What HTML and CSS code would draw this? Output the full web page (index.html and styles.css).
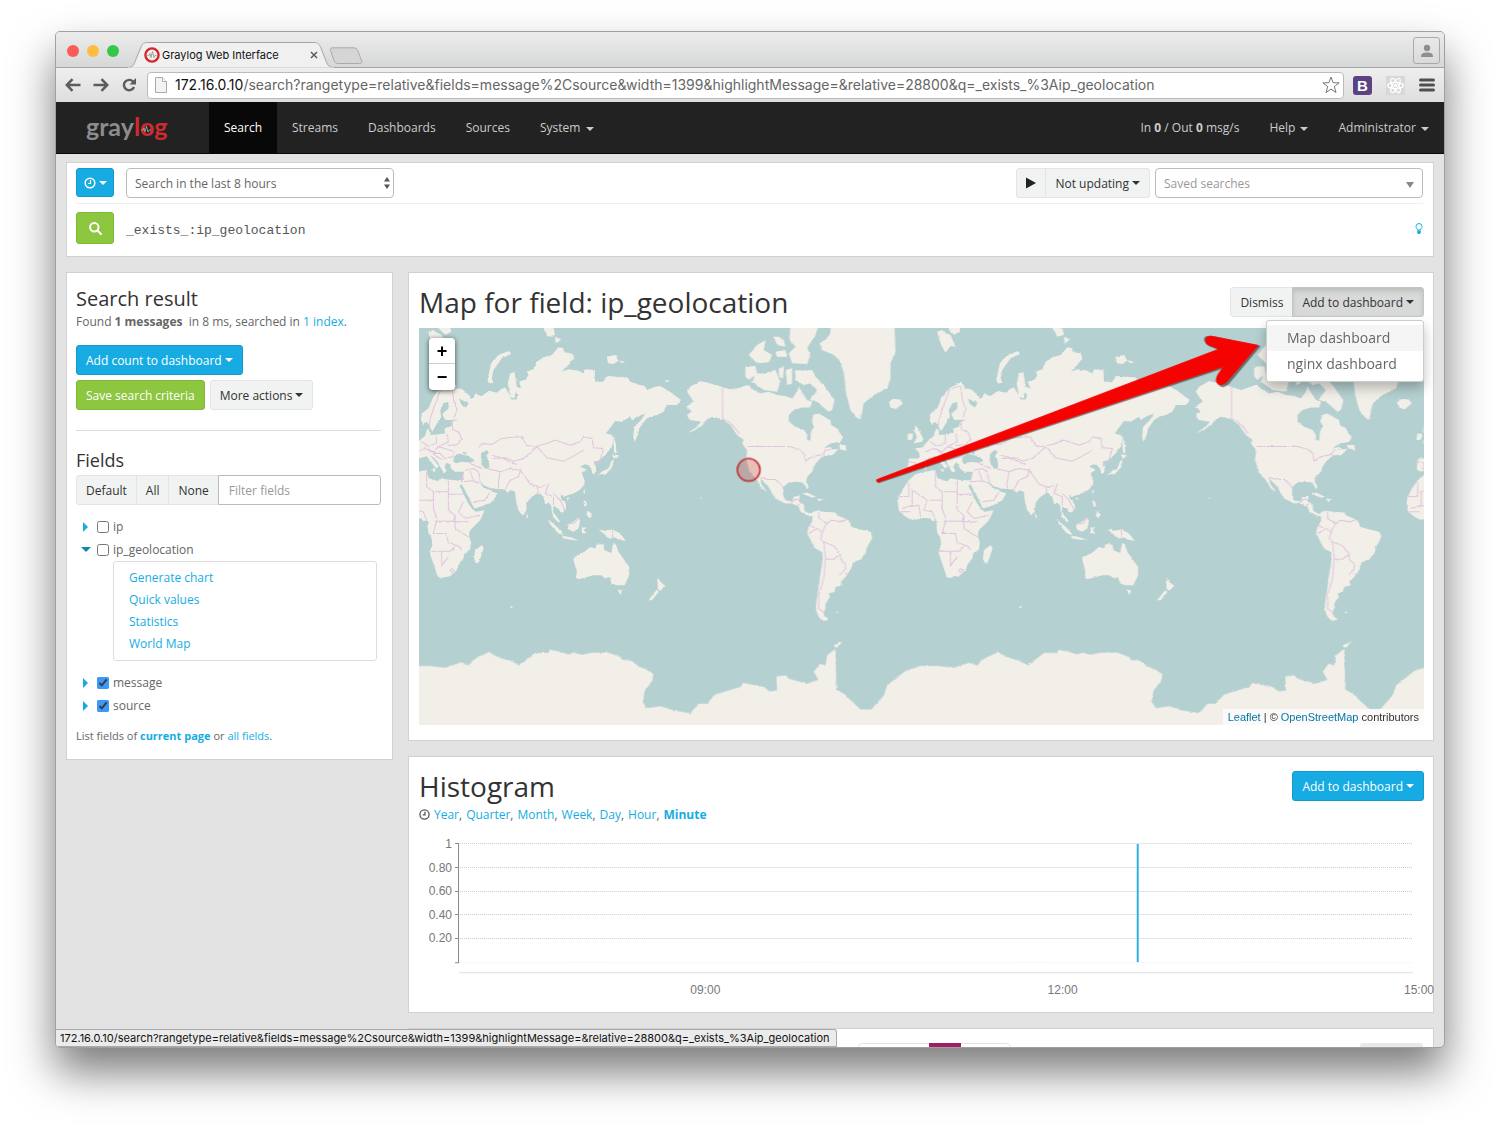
FILE: index.html
```html
<!DOCTYPE html>
<html lang="en">
<head>
<meta charset="utf-8">
<title>Graylog Web Interface</title>
<link rel="stylesheet" href="styles.css">
</head>
<body>
<div class="window">
  <header class="chrome">
    <div class="tabstrip">
      <span class="light light-close"></span><span class="light light-min"></span><span class="light light-max"></span>
      <div class="tab">
        <svg class="tab-shape" width="206" height="26" viewBox="0 0 206 26"><path d="M0 25.500C6 25 6 22 8 17L13 5C15 1 16 .5 20 .5H186C190 .5 191 2 193 6L198 19C200 24 201 25 206 25.500" fill="#f0f0f0" stroke="#a5a5a5"/><path d="M0 26H206" stroke="#efefef" stroke-width="1"/></svg>
        <svg class="favicon" width="16" height="16" viewBox="0 0 16 16"><circle cx="8" cy="8" r="6.600" fill="#eee" stroke="#d2282e" stroke-width="2.400"/><path d="M3.500 8.500H5l1-2 1 4 1.500-6 1.500 6 1-2h1.500" fill="none" stroke="#999" stroke-width=".9"/></svg>
        <span class="tab-title">Graylog Web Interface</span>
        <button class="tab-close" aria-label="Close tab"><svg width="8" height="8" viewBox="0 0 8 8"><path d="M1 1l6 6M7 1L1 7" stroke="#555" stroke-width="1.400"/></svg></button>
      </div>
      <svg class="newtab" width="34" height="18" viewBox="0 0 34 18"><path d="M4 .8H24c3 0 4 1 5 3l3.500 10c.8 2-.2 2.700-2 2.700H10c-3 0-4-1-5-3L1.500 3.500C1 1.500 2 .8 4 .8z" fill="#d4d5d4" stroke="#aaa"/></svg>
      <button class="profile" aria-label="Profile"><svg width="14" height="14" viewBox="0 0 14 14" fill="#8f8f8f"><circle cx="7" cy="4" r="3.200"/><path d="M1 13c0-3.500 2-4.500 6-4.500s6 1 6 4.500z"/></svg></button>
    </div>
    <div class="toolbar">
      <div class="tool-nav">
        <button class="tool" aria-label="Back"><svg width="16" height="14" viewBox="0 0 16 14"><path d="M15.500 7H2M7.500 1.200L1.800 7l5.700 5.800" fill="none" stroke="#5c5c5c" stroke-width="2.500"/></svg></button>
        <button class="tool" aria-label="Forward"><svg width="16" height="14" viewBox="0 0 16 14"><path d="M.5 7H14M8.500 1.200L14.200 7l-5.700 5.800" fill="none" stroke="#5c5c5c" stroke-width="2.500"/></svg></button>
        <button class="tool" aria-label="Reload"><svg width="16" height="14" viewBox="0 0 16 14"><path d="M12 3.500A5.200 5.200 0 1 0 13 9" fill="none" stroke="#5c5c5c" stroke-width="2.400"/><path d="M15 0v6.500H8.500z" fill="#5c5c5c"/></svg></button>
      </div>
      <div class="address">
        <svg width="12" height="16" viewBox="0 0 12 16"><path d="M.5 .5h7l4 4v11H.5z" fill="#f3f3f3" stroke="#aaa"/><path d="M7.500 .5v4h4" fill="#fff" stroke="#aaa"/></svg>
        <span class="url"><b>172.16.0.10</b>/search?rangetype=relative&amp;fields=message%2Csource&amp;width=1399&amp;highlightMessage=&amp;relative=28800&amp;q=_exists_%3Aip_geolocation</span>
        <svg width="18" height="18" viewBox="0 0 18 18"><path d="M9 1l2.100 5.700 6 .2-4.800 3.700 1.700 5.900L9 13.100l-5 3.400 1.700-5.900L.9 6.900l6-.2z" fill="#fff" stroke="#777" stroke-width="1"/></svg>
      </div>
      <span class="ext-b">B</span>
      <svg class="ext-r" width="19" height="19" viewBox="0 0 19 19"><path d="M0 0h19v19H0z" fill="#d8d8d8"/><g fill="none" stroke="#fff" stroke-width="1.200"><ellipse cx="9.500" cy="9.500" rx="8" ry="3"/><ellipse cx="9.500" cy="9.500" rx="8" ry="3" transform="rotate(60 9.500 9.500)"/><ellipse cx="9.500" cy="9.500" rx="8" ry="3" transform="rotate(120 9.500 9.500)"/></g><circle cx="9.500" cy="9.500" r="1.500" fill="#fff"/></svg>
      <button class="tool" aria-label="Menu"><svg width="16" height="14" viewBox="0 0 16 14"><path d="M1.500 2h13M1.500 7h13M1.500 12h13" stroke="#505050" stroke-width="3" stroke-linecap="round"/></svg></button>
    </div>
  </header>

  <nav class="navbar">
    <a class="brand" href="#" aria-label="graylog"><svg width="90" height="42" viewBox="0 0 90 42"><text class="logo" x="0" y="29"><tspan fill="#8c8c8c">gray</tspan><tspan fill="#cf2a2e">log</tspan></text><path d="M55 23h2l1-2 1 4 1.500-6 1.500 6 1-2h2" fill="none" stroke="#aaa" stroke-width=".8"/></svg></a>
    <a class="nav-link active" href="#">Search</a>
    <a class="nav-link" href="#">Streams</a>
    <a class="nav-link" href="#">Dashboards</a>
    <a class="nav-link" href="#">Sources</a>
    <a class="nav-link" href="#">System <i class="caret"></i></a>
    <span class="spacer"></span>
    <span class="nav-link">In <b>0</b> / Out <b>0</b> msg/s</span>
    <a class="nav-link" href="#">Help <i class="caret"></i></a>
    <a class="nav-link" href="#">Administrator <i class="caret"></i></a>
  </nav>

  <main class="page">
    <form class="panel query">
      <div class="query-row">
        <button type="button" class="btn btn-info btn-icon" aria-label="Time range type"><svg width="12" height="12" viewBox="0 0 12 12" fill="none" stroke="#fff" stroke-width="1.500"><circle cx="6" cy="6" r="4.800"/><path d="M6.500 3v3.500H4" stroke-width="1.200"/></svg><i class="caret"></i></button>
        <label class="pick range"><select aria-label="Time range"><option>Search in the last 8 hours</option></select><svg width="6" height="12" viewBox="0 0 6 12" fill="#555"><path d="M3 0l3 4.500H0zM3 12L0 7.500h6z"/></svg></label>
        <span class="spacer"></span>
        <div class="group">
          <button type="button" class="btn" aria-label="Play"><svg width="10" height="12" viewBox="0 0 10 12"><path d="M0 .5l10 5.500-10 5.500z" fill="#222"/></svg></button><button type="button" class="btn">Not updating<i class="caret"></i></button>
        </div>
        <label class="pick saved"><select aria-label="Saved searches"><option>Saved searches</option></select><svg width="8" height="6" viewBox="0 0 8 6"><path d="M0 0h8L4 6z" fill="#888"/></svg></label>
      </div>
      <div class="query-row query-text">
        <button type="button" class="btn btn-success btn-search" aria-label="Search"><svg width="13" height="13" viewBox="0 0 13 13" fill="none" stroke="#fff" stroke-width="2"><circle cx="5.300" cy="5.300" r="4.200"/><path d="M8.500 8.500l3.500 3.500" stroke-linecap="round"/></svg></button>
        <input type="text" value="_exists_:ip_geolocation" aria-label="Query" spellcheck="false">
        <a href="#" aria-label="Search help"><svg width="8" height="11" viewBox="0 0 8 11"><path d="M2.500 7C2.500 5.500 1 5 1 3.500a3 3 0 0 1 6 0C7 5 5.500 5.500 5.500 7z" fill="#fff" stroke="#16ace3"/><path d="M2.200 7.500h3.600v2L5 11H3l-.8-1.500z" fill="#16ace3"/></svg></a>
      </div>
    </form>

    <div class="columns">
      <aside class="panel sidebar">
        <h2>Search result</h2>
        <p class="found">Found <b>1 messages</b>&nbsp; in 8 ms, searched in <a href="#">1 index</a>.</p>
        <div class="actions">
          <button class="btn btn-info">Add count to dashboard<i class="caret"></i></button>
          <button class="btn btn-success">Save search criteria</button>
          <button class="btn">More actions<i class="caret"></i></button>
        </div>
        <h3>Fields</h3>
        <div class="group filter">
          <button class="btn">Default</button><button class="btn">All</button><button class="btn">None</button><input type="text" placeholder="Filter fields" aria-label="Filter fields">
        </div>
        <ul class="fields">
          <li><i class="arrow"></i><label><input type="checkbox">ip</label></li>
          <li><i class="arrow open"></i><label><input type="checkbox">ip_geolocation</label></li>
          <li class="sub"><a href="#">Generate chart</a><a href="#">Quick values</a><a href="#">Statistics</a><a href="#">World Map</a></li>
          <li><i class="arrow"></i><label><input type="checkbox" checked>message</label></li>
          <li><i class="arrow"></i><label><input type="checkbox" checked>source</label></li>
        </ul>
        <p class="listing">List fields of <a href="#"><b>current page</b></a> or <a href="#">all fields</a>.</p>
      </aside>

      <div class="results">
        <section class="panel widget">
          <div class="widget-head">
            <h1>Map for field: ip_geolocation</h1>
            <div class="group">
              <button class="btn">Dismiss</button><button class="btn pressed">Add to dashboard<i class="caret"></i></button>
              <div class="menu"><a class="hover" href="#">Map dashboard</a><a href="#">nginx dashboard</a></div>
            </div>
          </div>
          <div class="map">
            <svg class="world" viewBox="0 0 3012 1191" preserveAspectRatio="xMinYMin slice">
              <defs>
                <filter id="coast" x="-5%" y="-5%" width="110%" height="110%"><feTurbulence type="fractalNoise" baseFrequency=".1" numOctaves="2" seed="4"/><feDisplacementMap in="SourceGraphic" scale="7" xChannelSelector="R" yChannelSelector="G"/></filter>
                <g id="east">
                  <path class="land" d="M148 188L165 196 160 205 180 207 205 228 207 240 190 245 172 235 178 252 192 262 200 252 197 243 215 232 222 218 228 225 240 228 262 212 285 218 300 205 310 202 322 222 330 238 345 238 350 225 340 215 345 200 360 205 350 185 372 178 380 165 375 155 395 148 405 125 425 112 450 105 470 82 485 85 485 97 510 100 515 115 500 135 480 155 500 148 530 152 545 160 550 148 578 150 580 185 605 185 615 168 675 172 685 185 730 200 735 210 760 200 775 198 800 212 837 240 825 255 795 255 785 275 765 285 745 290 730 300 712 325 708 345 698 365 694 350 697 320 718 300 730 280 705 290 690 300 685 290 660 305 640 303 612 340 630 345 635 355 630 380 610 405 590 420 575 425 582 440 583 455 572 462 568 445 560 435 548 432 535 440 555 448 540 460 548 480 548 492 535 508 515 520 498 525 485 530 475 522 478 535 492 550 493 565 483 578 475 575 470 565 455 560 453 575 465 590 475 605 470 607 455 592 450 575 448 555 440 548 430 552 425 530 415 520 408 518 390 530 375 548 372 575 362 585 350 570 342 540 340 515 325 510 318 518 308 508 270 505 250 498 240 490 232 472 235 488 245 503 262 508 270 514 287 520 275 540 260 550 235 560 218 565 210 550 200 530 187 505 180 492 173 497 187 525 200 550 212 567 222 575 248 570 245 580 235 600 210 625 203 635 202 650 208 665 205 688 188 700 185 715 172 730 165 750 145 768 115 773 108 768 95 730 88 710 84 693 92 675 90 655 80 638 78 620 80 605 75 600 65 603 60 595 40 593 20 598 0 597 -15 590 -35 572 -38 545 -35 530 -22 505 -5 480 15 462 40 455 75 450 78 465 82 474 100 480 110 483 120 474 135 478 160 480 182 480 187 455 160 455 148 445 145 432 135 428 128 440 135 453 125 456 115 440 108 425 95 412 85 405 95 418 112 438 103 445 88 425 75 408 62 412 48 415 40 430 28 447 5 455 -8 448 -5 415 20 415 28 412 25 395 12 385 35 382 45 370 60 355 70 348 75 330 85 325 85 345 105 343 130 340 128 325 145 320 150 305 168 298 130 300 122 282 140 265 140 245 125 250 115 270 118 290 100 320 92 335 82 315 75 305 65 315 58 300 60 280 80 265 95 230 115 205z"/>
                  <path class="land" d="M322 93l6 9-28 13-25 35-5 25 5 13-13 2-5-10 11-50 22-25zM80 35l15-5 5 5 20 10 15 35-15-2-15 20-13-23-7-20zM110 24h38v12l-18 8zM425 24h30l5 20-20 6zM460 50l18 8-16 14zM615 110l25-5 10 17-15 10-17-2zM652 120l18 6-12 3zM325 160l13-5 7 45-7 35-13-5-7-40zM634 345l8 27 2 30-8-7zM630 402l22 4-16 10zM636 417l-5 24-19 21h-17l-10 8 15-16 20-9 8-22zM15 315l10 15 13 25-3 10-25 5 10-20-8-15zM-6 340l14 1-3 17-14 2zM437 597l23 18 20 20 5 10-15-5-20-22zM482 647l28 5 20 8-30-2-18-5zM497 612l18-7 13-13 7 8-5 25-15 10-17-7zM540 622h15l-10 7 9 10h-14zM545 540l8 4 3 16-8-2zM560 572l10 10-6 12-9-8zM590 628l20 4 22-4 23 12 17 22-22-4-10-6-18 3-17-15zM515 720v-8l30-15 20-17 15 5 5-13 20 1 3 17 20 8 7-30 7 4 8 23 12 17 20 28v25l-14 30h-23l-17-5-6-20-12 5-12-10h-23l-25 7-20 5-8-5 3-17zM647 808l15 2-7 14zM767 772l13 19 10 4-15 17-8-7zM765 808l5 7-20 25h-11zM220 690l20-16 6 11-14 40-10 5-5-15zM372 578l8 12-5 5zM495 533h8l-6 8zM544 512l6-4-3 15zM40 428h7v20h-5zM88 447l15 1-6 8zM710 650l10 5M722 660l20 10M728 706l15 10M325 857l10 3-8 4z"/>
                  <path class="sea" d="M158 408l15-8 10 4 22 4 14 14-14 6-25-3-18 5-8-8zM180 398l14-4-4 10zM238 400l15-10 8 5-7 12 7 15 2 20-13 4-10-12-2-20z"/>
                  <path class="border" d="M117 208l-22 60-10 30-2 20M125 205l25-8 6 45 10 25-8 25M152 300v28l20 8 8 20-15 18-30 2M104 344v25l-25 10-20-15M135 340l5 25-30 15-15 15-25-10-25 10M110 380l20 5 28 10-5 15-25 5-15-20M75 385l30 25 20 10M95 400l20 0M-5 425l20 3-5 22M230 382l12-12 28 3 30-18 40-4 20 0 15 25 30 5-25 22-15 12-30 8-22-10-40 2M405 378l30-8 25-10 45 15 30-10 10-15 25 5 5 28 30 2-10 35-20 15M405 378l30 35 50 10 30-15 30-18M205 430l35 15M190 450l25-5 15 10 5 20M185 455l-5 30 35-3-10-30M215 482l25 10M215 545l35-5 15-25M255 445l40 10 30-10 30 5 15 20 15 22 30 10 15-8M295 455l-5 30 0 20M325 480l-15 28M325 480l25-10 8-25M270 405l30 8 30 15 15 5M405 495l5 25M440 490l-10 30 25 10 0 25M455 520l20 20 15 30M497 612l20-3 15-18M632 630v25M-35 530l30-2v-40M5 510l45 30M5 510v45l-30 10M75 455v45l20 15 0 50M100 515h40v55M140 482v40h45M50 540l45 0M50 540l-10 30 25 5 10 25M95 565l10 30M140 570l20 15-5 18h-55M185 545l-15 30 20 20 45-10M160 585v40l40 25M105 600l-10 40h40l5 30M85 693h60l15-15M120 695v40l20-25M145 668l25 10 10 10M150 745l8 6-8 6-5-6zM0 560l25-5 5 35M-30 575h30M155 605h45"/>
                </g>
                <g id="west">
                  <path class="land" d="M120 183L150 190 185 200 215 210 245 200 262 195 275 205 300 220 325 215 350 225 375 228 395 235 410 215 415 200 430 225 440 240 455 245 450 262 425 262 400 270 385 285 385 305 405 320 430 330 440 345 440 360 450 362 452 335 460 320 455 305 458 285 475 280 500 295 510 300 512 315 530 325 547 352 540 365 510 370 490 385 510 380 515 388 535 386 515 405 490 405 470 425 460 440 455 455 440 470 437 485 445 500 440 508 430 488 410 485 385 487 370 500 368 525 375 540 395 545 400 530 418 527 415 545 430 552 432 572 450 582 458 575 470 572 490 575 525 577 530 585 560 598 570 610 572 620 600 628 630 635 637 650 620 680 615 700 600 718 580 725 570 748 555 770 540 785 545 795 525 800 520 815 505 820 508 830 495 850 495 865 488 880 505 898 490 902 475 890 467 870 467 850 475 800 480 760 487 720 485 695 465 685 440 640 445 620 455 605 456 588 440 585 420 575 415 560 395 550 375 550 345 535 335 520 325 500 305 480 299 474 303 490 320 517 305 505 290 480 268 455 258 420 260 390 245 370 250 360 230 345 210 315 185 297 155 290 140 298 130 310 105 330 80 340 110 320 122 305 88 300 80 285 95 275 78 260 100 245 80 215 90 200z"/>
                  <path class="land" d="M510 15H702L705 95 690 130 690 175 680 205 640 225 610 250 600 298 585 290 570 270 558 225 550 160 540 125 520 105 485 90 478 70 500 55 510 40zM405 150l22 2 28-2 10 20 25 25 32 45-7 30-10 5-35-30-22-5 22-30-20-20-20 5-25-15zM285 160l25 0 35-10 15 35-10 30-40-5-35-25zM255 140l30-2 5 22-25 20-10-10zM390 15h85l-10 30-25 40 10 20-10 27-45-2-10-30 20-20-18-20zM265 105l25-30 25-15-5 30 25 15-10 22-35 3zM340 50l15 0 15 10 5 20-25-5zM355 145l15-5-2 35-12-5zM376 150l19-5v45l-15 5zM345 95l30-5 5 20-30 0zM405 245l20 5-8 12-14-5zM685 245l12-8 23 1 7 12-22 18-15-6zM425 520l15-3 27 13-12 3zM470 535l20 3-15 5zM535 375l20 0 3 17-18-4zM120 530l6 5-5-1zM-5 785l10 3 8 10-12 12zM525 874l12 2-8 4zM15 180l15 2-13 5zM520 975l28-12-20 20z"/>
                  <path class="border" d="M187 200v96l20 10 15 15 15 20M262 379H385L415 387 432 402 434 423 455 410 485 403 495 390 510 388M298 472l25 6 22 0 15 12 10 15M392 550l10-12 12 0M405 560l12-8M475 575v20l25 15 12-10 30 5 20-8M500 610l-10 15-10 30 10 10 5 50-5 60-15 50 0 40 20 15M445 640l25-15 15 10M445 615l18 8M490 665l30 12 20 25-20 15h-25M540 702l0 15 15 15 0 15-18 18M555 760l10 5"/>
                </g>
                <path id="south" class="land" d="M0 1047L30 1037 80 1037 130 1042 175 1027 200 1035 215 1018 262 995 275 1003 310 1018 325 1020 352 1035 400 998 440 998 443 988 470 993 500 1002 515 997 540 1003 570 997 620 997 655 1010 660 1018 690 1022 710 1038 735 1048 755 1062 750 1085 728 1110 723 1145 735 1163 775 1157 815 1170 865 1178 890 1150 915 1150 940 1122 1015 1100 1025 1088 1085 1100 1103 1113 1125 1110 1123 1068 1150 1065 1160 1075 1215 1090 1250 1078 1235 1055 1253 1030 1270 1035 1275 1005 1300 985 1303 1108 1325 1120 1375 1167 1407 1167 1445 1125 1455 1095 1510 1052 1530 1045V1240H0z"/>
              </defs>
              <g filter="url(#coast)">
                <use href="#east" x="-52" y="-24"/><use href="#east" x="1473" y="-24"/><use href="#east" x="2998" y="-24"/>
                <use href="#west" x="723" y="-24"/><use href="#west" x="2248" y="-24"/>
                <use href="#south" x="-52" y="-24"/><use href="#south" x="1473" y="-24"/><use href="#south" x="2998" y="-24"/>
              </g>
              <circle cx="988" cy="425" r="34" fill="#cb2b2b" fill-opacity=".25" stroke="#c13b3b" stroke-width="5"/>
              <g transform="scale(3)">
                <path d="M457 153L799 22 789 18Q782 13 785 9 788 7 793 8L841 18 809 56Q804 61 800 58 795 55 799 48L805 40 459 155z" fill="#333" opacity=".6"/>
                <path d="M457 151L798 21 788 17Q784 14 786 10 788 7 793 8L839 17 807 54Q802 59 798 56 794 53 798 46L803 39 459 154Q456 154 457 151z" fill="#f50300"/>
              </g>
            </svg>
            <div class="zoom"><button aria-label="Zoom in">+</button><button aria-label="Zoom out">−</button></div>
            <div class="credit"><a href="#">Leaflet</a> | © <a href="#">OpenStreetMap</a> contributors</div>
          </div>
        </section>

        <section class="panel widget">
          <div class="widget-head">
            <h1>Histogram</h1>
            <button class="btn btn-info">Add to dashboard<i class="caret"></i></button>
          </div>
          <p class="units"><svg width="11" height="11" viewBox="0 0 12 12" fill="none" stroke="#555" stroke-width="1.400"><circle cx="6" cy="6" r="5"/><path d="M6.500 3v3.500H4"/></svg><span><a href="#">Year</a>,</span><span><a href="#">Quarter</a>,</span><span><a href="#">Month</a>,</span><span><a href="#">Week</a>,</span><span><a href="#">Day</a>,</span><span><a href="#">Hour</a>,</span><a href="#"><b>Minute</b></a></p>
          <svg class="chart" viewBox="0 0 1004 174">
            <path d="M41 18.500H993M41 42.500H993M41 66.500H993M41 89.500H993M41 113.500H993" stroke="#ccc" stroke-dasharray="1 1"/>
            <path d="M41 137.500H993" stroke="#eee" stroke-dasharray="1 1"/>
            <path d="M36 18.500h3.500V137.500H36M36 42.500h3M36 66.500h3M36 89.500h3M36 113.500h3" fill="none" stroke="#888"/>
            <path d="M40 147.500H993" stroke="#ddd"/>
            <path d="M718 19V137" stroke="#31b0e3" stroke-width="2"/>
            <g text-anchor="end"><text x="33" y="23">1</text><text x="33" y="47">0.80</text><text x="33" y="70">0.60</text><text x="33" y="94">0.40</text><text x="33" y="117">0.20</text></g>
            <g text-anchor="middle"><text x="286" y="169">09:00</text><text x="643" y="169">12:00</text><text x="999" y="169">15:00</text></g>
          </svg>
        </section>

        <section class="panel widget next">
          <div class="pager"><span></span><span class="current"></span><span></span></div>
          <div class="stub"></div>
        </section>
      </div>
    </div>
  </main>
  <div class="status">172.16.0.10/search?rangetype=relative&amp;fields=message%2Csource&amp;width=1399&amp;highlightMessage=&amp;relative=28800&amp;q=_exists_%3Aip_geolocation</div>
</div>
</body>
</html>
```
FILE: styles.css
```css
* { box-sizing: border-box; }

body {
  margin: 0;
  height: 100vh;
  padding: 31px 55px 79px;
  background: #fff;
  color: #666;
  font: 12px/17px "Open Sans", "Noto Sans", sans-serif;
  overflow: hidden;
}

a { color: #16ace3; text-decoration: none; }
h1, h2, h3, p, ul { margin: 0; padding: 0; font-weight: 400; }
h1, h2, h3 { color: #333; }
h1 { font-size: 28px; line-height: 36px; }
h2 { font-size: 20px; line-height: 26px; }
h3 { font-size: 18px; line-height: 24px; }
button, input, select { font: inherit; color: inherit; margin: 0; }
button { border: 0; background: none; padding: 0; }
svg { display: block; flex: none; }
.spacer { flex: 1; }

.window {
  position: relative;
  display: flex;
  flex-direction: column;
  height: 100%;
  overflow: hidden;
  border: 1px solid #a0a0a0;
  border-radius: 5px;
  background: #e3e3e3;
  box-shadow: 0 24px 44px rgba(0, 0, 0, .52);
}

/* Browser frame */
.chrome { flex: none; font-family: Inter, Roboto, sans-serif; color: #111; }
.tabstrip {
  display: flex;
  align-items: center;
  height: 36px;
  padding: 0 4px 0 11px;
  border-bottom: 1px solid #a5a5a5;
  background: linear-gradient(#ececec, #d6d8d7);
}
.light { width: 12px; height: 12px; margin: 2px 8px 0 0; border-radius: 50%; }
.light-close { background: #fc5b57; }
.light-min { background: #fdbd41; }
.light-max { background: #34c84a; }
.tab { position: relative; display: flex; align-items: center; align-self: flex-end; width: 206px; height: 26px; margin: 0 0 -1px 1px; padding: 0 16px 0 16px; }
.tab-shape { position: absolute; left: 0; top: 0; }
.favicon, .tab-title, .tab-close { position: relative; }
.tab-title { flex: 1; margin-left: 2px; font-size: 11px; white-space: nowrap; }
.newtab { margin: 12px 0 0 -5px; }
.profile { display: grid; place-items: center; width: 27px; height: 27px; margin: 2px 0 0 auto; border: 1px solid #aaa; border-radius: 3px; }
.toolbar { display: flex; align-items: center; gap: 14px; height: 34px; padding: 0 9px; background: linear-gradient(#efefef, #dedede); }
.tool-nav { display: flex; gap: 12px; }
.address { display: flex; align-items: center; gap: 8px; flex: 1; min-width: 0; height: 27px; margin: 0 -5px 0 -4px; padding: 0 3px 0 7px; border: 1px solid #bbb; border-radius: 4px; background: #fff; }
.url { flex: 1; min-width: 0; overflow: hidden; color: #666; font-size: 14px; line-height: 20px; white-space: nowrap; }
.url b { color: #111; font-weight: 400; }
.ext-b { width: 19px; height: 19px; border-radius: 3px; background: #5a4284; color: #fff; font: 700 15px/19px "Liberation Sans", sans-serif; text-align: center; }

/* Navigation */
.navbar { display: flex; flex: none; height: 52px; border-bottom: 1px solid #080808; background: #222; }
.brand { width: 153px; padding: 5px 0 0 30px; }
.logo { font: 700 25px Lato, sans-serif; }
.nav-link { display: flex; align-items: center; gap: 2px; padding: 0 15px; color: #ccc; white-space: pre; }
.nav-link.active { background: #080808; color: #fff; }
.caret { display: inline-block; margin-left: 3px; border: 4px solid transparent; border-top-color: currentColor; border-bottom: 0; vertical-align: middle; }
.nav-link .caret { margin: 2px 0 0; }
span.nav-link { gap: 0; }

/* Buttons */
.btn { display: inline-flex; align-items: center; justify-content: center; height: 30px; padding: 0 9px; border: 1px solid #e3e5e5; border-radius: 3px; background: #f1f2f2; color: #333; white-space: nowrap; }
.btn-info { border-color: #159bcb; background: #16ace3; color: #fff; }
.btn-success { border-color: #80b936; background: #8dc63f; color: #fff; }
.pressed { border-color: #c4c6c6; background: #d8d9d9; box-shadow: inset 0 3px 5px rgba(0, 0, 0, .13); }
.group { position: relative; display: flex; }
.group .btn + .btn { margin-left: -1px; }
.group .btn:not(:first-child) { border-top-left-radius: 0; border-bottom-left-radius: 0; }
.group .btn:first-child { border-top-right-radius: 0; border-bottom-right-radius: 0; }

/* Page */
.page { flex: 1; min-height: 0; padding: 8px 10px 0; overflow: hidden; }
.panel { border: 1px solid #d1d1d1; background: #fff; }
.query { height: 95px; margin-bottom: 15px; padding: 5px 10px 0 9px; }
.query-row { display: flex; gap: 5px; height: 36px; border-bottom: 1px solid #eee; }
.btn-icon { width: 38px; height: 29px; margin-right: 7px; padding: 0; }
.pick { position: relative; display: block; width: 268px; }
.pick select { width: 100%; height: 30px; padding: 0 8px; border: 1px solid #bbb; border-radius: 4px; background: #fff; appearance: none; }
.pick svg { position: absolute; top: 9px; right: 4px; pointer-events: none; }
.saved select { color: #999; }
.saved svg { top: 14px; right: 9px; }
.query-text { align-items: center; height: 48px; border: 0; }
.btn-search { width: 38px; height: 32px; }
.query-text input { flex: 1; min-width: 0; border: 0; outline: 0; padding: 5px 0 0 7px; color: #555; font: 13px "Liberation Mono", monospace; }

.columns { display: grid; grid-template-columns: 327px minmax(0, 1fr); gap: 15px; align-items: start; }
.sidebar { padding: 13px 11px 15px 9px; }
.found { margin: 1px 0 15px; }
.actions { display: flex; flex-wrap: wrap; gap: 5px; padding-bottom: 20px; border-bottom: 1px solid #ddd; }
.actions .btn-info { margin-right: 100px; }
.sidebar h3 { margin: 17px 0 3px; }
.filter input { flex: 1; min-width: 0; height: 30px; padding: 0 10px; border: 1px solid #bbb; border-radius: 0 3px 3px 0; margin-left: -1px; }
.filter .btn:not(:first-child) { border-radius: 0; }
::placeholder { color: #999; opacity: 1; }
.fields { margin-top: 10px; list-style: none; }
.fields li { display: flex; align-items: center; height: 23px; }
.fields label { display: flex; align-items: center; gap: 4px; }
.fields input { width: 12px; height: 12px; accent-color: #3b99fc; }
.arrow { width: 21px; }
.arrow::before { content: ""; display: block; width: 0; margin-left: 7px; border: 5px solid transparent; border-left-color: #16ace3; border-right: 0; }
.arrow.open::before { margin-left: 5px; border: 5px solid transparent; border-top-color: #1287b2; border-bottom: 0; }
.fields .sub { flex-direction: column; align-items: flex-start; height: 100px; margin: 0 4px 10px 37px; padding: 5px 15px; border: 1px solid #ddd; border-radius: 3px; line-height: 22px; }
.listing { margin-top: 10px; font-size: 11px; }

.results { display: grid; gap: 15px; min-width: 0; }
.widget { padding: 11px 9px 15px 10px; min-width: 0; }
.widget-head { display: flex; justify-content: space-between; align-items: center; min-height: 36px; }
.menu { position: absolute; z-index: 2; top: 33px; right: 0; width: 158px; padding: 4px 0; border: 1px solid #ccc; border-radius: 3px; background: #fff; box-shadow: 0 6px 12px rgba(0, 0, 0, .25); font-size: 14px; line-height: 26px; }
.menu a { display: block; padding: 0 20px; color: #666; }
.menu .hover { background: #f5f5f5; }

.map { position: relative; height: 397px; margin-top: 8px; background: #b5d0d0; overflow: hidden; }
.world { width: 100%; height: 100%; }
.land { fill: #f2efe9; }
.sea { fill: #b5d0d0; }
.border { fill: none; stroke: #e0c4de; stroke-width: 3; }
.zoom { position: absolute; left: 10px; top: 10px; width: 26px; border-radius: 4px; background: #fff; box-shadow: 0 1px 5px rgba(0, 0, 0, .65); }
.zoom button { display: block; width: 26px; height: 26px; color: #000; font: 700 18px/26px "Liberation Sans", sans-serif; }
.zoom button:first-child { border-bottom: 1px solid #ccc; }
.credit { position: absolute; right: 0; bottom: 0; padding: 0 5px; background: rgba(255, 255, 255, .7); color: #333; font: 11px/16px "Liberation Sans", sans-serif; }
.credit a { color: #0078a8; }

.units { display: flex; align-items: center; gap: 4px; margin-top: 2px; }
.chart { width: 100%; margin: 2px 0 -2px; overflow: visible; }
.chart text { fill: #777; font: 12px "Liberation Sans", sans-serif; }

.next { display: flex; justify-content: space-between; height: 120px; padding: 14px 10px 0; }
.pager { display: flex; width: 153px; height: 30px; margin-left: 439px; border: 1px solid #e3e5e5; border-radius: 4px; }
.pager span { flex: 1; }
.pager .current { flex: 0 0 32px; margin: -1px 0 0 20px; background: #9e1f63; }
.stub { width: 63px; height: 30px; border-radius: 3px; background: #e8e8e8; }

.status { position: absolute; left: 0; bottom: 0; padding: 0 6px 0 4px; border: 1px solid #aaa; border-left: 0; border-radius: 0 3px 0 0; background: #ebebeb; color: #111; font: 11px/16px Inter, Roboto, sans-serif; white-space: nowrap; }
```
